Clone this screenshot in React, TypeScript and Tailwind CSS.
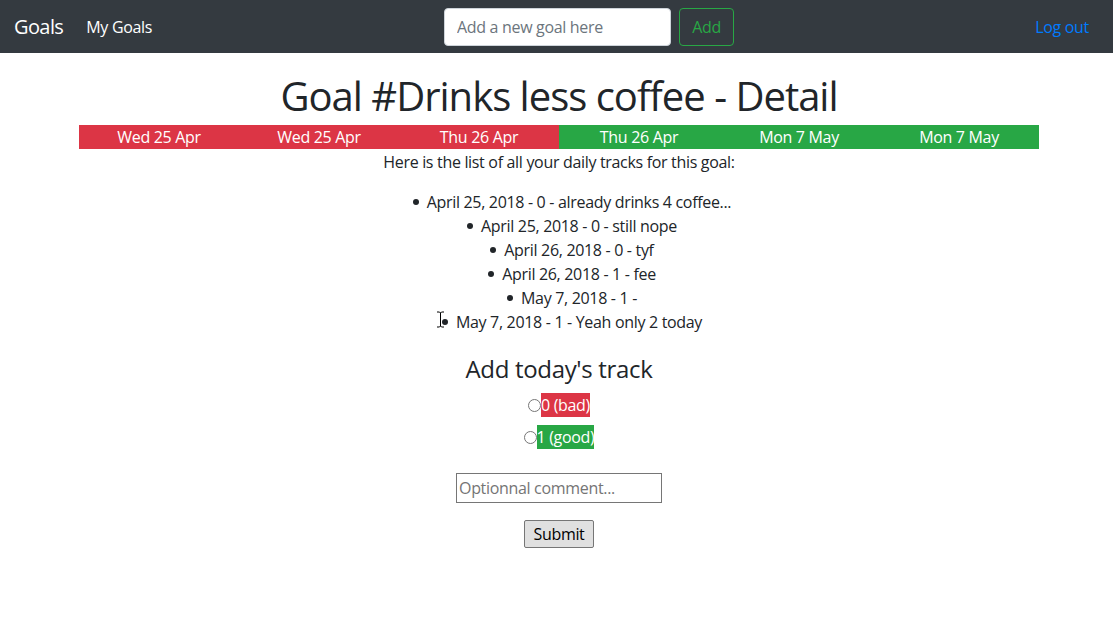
import React from "react";

const days = [
  { label: "Wed 25 Apr", good: false },
  { label: "Wed 25 Apr", good: false },
  { label: "Thu 26 Apr", good: false },
  { label: "Thu 26 Apr", good: true },
  { label: "Mon 7 May", good: true },
  { label: "Mon 7 May", good: true },
];

const tracks = [
  "April 25, 2018 - 0 - already drinks 4 coffee...",
  "April 25, 2018 - 0 - still nope",
  "April 26, 2018 - 0 - tyf",
  "April 26, 2018 - 1 - fee",
  "May 7, 2018 - 1 -",
  "May 7, 2018 - 1 - Yeah only 2 today",
];

export default function App() {
  return (
    <div
      className="relative min-h-[632px] bg-white text-[#212529] text-[16px] leading-[24px] tracking-[-0.02em]"
      style={{ fontFamily: '"Open Sans", "Noto Sans", sans-serif' }}
    >
      <nav className="flex h-[53px] items-center bg-[#343a40] pr-4">
        <div className="flex w-[444px] items-center pl-[14px]">
          <a className="text-[20px] leading-[30px] tracking-[-0.03em] text-white">Goals</a>
          <a className="ml-[23px] text-white">My Goals</a>
        </div>
        <form className="flex items-center" onSubmit={(e) => e.preventDefault()}>
          <input
            className="h-[38px] w-[227px] rounded-[4px] border border-[#ced4da] bg-white px-3 text-[16px] tracking-[-0.02em] text-[#495057] placeholder:text-[#6c757d] outline-none"
            placeholder="Add a new goal here"
          />
          <button
            type="button"
            className="ml-2 h-[38px] w-[55px] rounded-[4px] border border-[#28a745] text-[16px] tracking-[-0.02em] text-[#28a745]"
          >
            Add
          </button>
        </form>
        <a className="ml-auto px-2 text-[#007bff]">Log out</a>
      </nav>

      <main className="flex flex-col items-center pl-[5px]">
        <h1 className="mt-[19px] mb-[5px] text-[40px] leading-[48px] font-normal tracking-[-0.025em]">
          Goal #Drinks less coffee - Detail
        </h1>
        <div className="flex w-[960px]">
          {days.map((d, i) => (
            <div
              key={i}
              className={
                "flex-1 pt-px text-center text-white leading-[23px] " +
                (d.good ? "bg-[#28a745]" : "bg-[#dc3545]")
              }
            >
              {d.label}
            </div>
          ))}
        </div>
        <p className="mb-4 pt-px">Here is the list of all your daily tracks for this goal:</p>
        <ul className="pl-[26px]">
          {tracks.map((t, i) => (
            <li key={i} className="flex items-center justify-center">
              <span className="mr-[8px] mb-px inline-block h-[6px] w-[6px] rounded-full bg-[#212529]" />
              <span>{t}</span>
            </li>
          ))}
        </ul>
        <h4 className="mt-[20px] mb-[10px] text-[24px] leading-[29px] font-normal">Add today's track</h4>
        <div className="flex flex-col items-center gap-2">
          <label className="flex items-center">
            <input type="radio" name="val" className="m-0 h-[13px] w-[13px]" />
            <span className="bg-[#dc3545] text-white">0 (bad)</span>
          </label>
          <label className="flex items-center">
            <input type="radio" name="val" className="m-0 h-[13px] w-[13px]" />
            <span className="bg-[#28a745] text-white">1 (good)</span>
          </label>
        </div>
        <input
          className="mt-[24px] h-[30px] w-[206px] border border-[#767676] px-[2px] text-[16px] tracking-[-0.02em] placeholder:text-[#757575] outline-none"
          placeholder="Optionnal comment..."
        />
        <button
          type="button"
          className="mt-[17px] h-[28px] w-[70px] rounded-[2px] border border-[#767676] bg-[#e0e0e0] text-[16px] tracking-[-0.02em] text-black"
        >
          Submit
        </button>
      </main>

      <svg
        className="absolute left-[436px] top-[311px]"
        width="9"
        height="17"
        viewBox="0 0 9 17"
      >
        <path d="M1 1h2.5L4.5 2 5.5 1H8M4.5 2v13M1 16h2.5l1-1 1 1H8" stroke="#000" strokeWidth="1" fill="none" />
      </svg>
    </div>
  );
}
